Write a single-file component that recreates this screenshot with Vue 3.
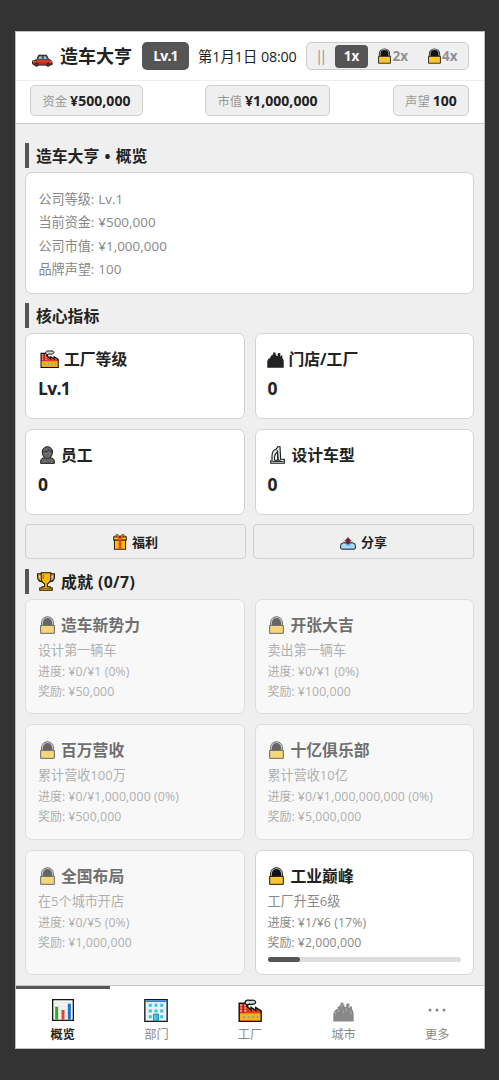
<script setup>
const speeds = [
  { label: '||', kind: 'pause' },
  { label: '1x', kind: 'on' },
  { label: '2x', kind: 'locked' },
  { label: '4x', kind: 'locked' },
]
const resources = [
  { name: '资金', value: '¥500,000', id: 'cash' },
  { name: '市值', value: '¥1,000,000', id: 'market' },
  { name: '声望', value: '100', id: 'fame' },
]
const overview = [
  ['公司等级:', 'Lv.1'],
  ['当前资金:', '¥500,000'],
  ['公司市值:', '¥1,000,000'],
  ['品牌声望:', '100'],
]
const stats = [
  { icon: 'factory', title: '工厂等级', value: 'Lv.1' },
  { icon: 'city', title: '门店/工厂', value: '0' },
  { icon: 'person', title: '员工', value: '0' },
  { icon: 'design', title: '设计车型', value: '0' },
]
const achievements = [
  { title: '造车新势力', desc: '设计第一辆车', progress: '¥0/¥1 (0%)', reward: '¥50,000', pct: 0 },
  { title: '开张大吉', desc: '卖出第一辆车', progress: '¥0/¥1 (0%)', reward: '¥100,000', pct: 0 },
  { title: '百万营收', desc: '累计营收100万', progress: '¥0/¥1,000,000 (0%)', reward: '¥500,000', pct: 0 },
  { title: '十亿俱乐部', desc: '累计营收10亿', progress: '¥0/¥1,000,000,000 (0%)', reward: '¥5,000,000', pct: 0 },
  { title: '全国布局', desc: '在5个城市开店', progress: '¥0/¥5 (0%)', reward: '¥1,000,000', pct: 0 },
  { title: '工业巅峰', desc: '工厂升至6级', progress: '¥1/¥6 (17%)', reward: '¥2,000,000', pct: 17 },
]
const tabs = [
  { icon: 'chart', label: '概览' },
  { icon: 'building', label: '部门' },
  { icon: 'factory', label: '工厂' },
  { icon: 'city', label: '城市' },
  { icon: 'more', label: '更多' },
]
</script>

<template>
  <svg class="sprite" aria-hidden="true">
    <symbol id="car" viewBox="0 0 64 38">
      <path d="M15 17 20 3H44L51 16 60 20 62 31 56 33H7L2 30V20Z" fill="#d93a2b" stroke="#171717" stroke-width="3" stroke-linejoin="round" />
      <path d="M17 16 22 5H31V16ZM34 5H43L48 16H34Z" fill="#78c7d8" stroke="#253238" stroke-width="2" />
      <path d="M3 27H61" stroke="#9f241d" stroke-width="3" />
      <circle cx="14" cy="32" r="5" fill="#444" stroke="#111" stroke-width="2" />
      <circle cx="49" cy="32" r="5" fill="#444" stroke="#111" stroke-width="2" />
      <path d="M3 21H7M57 21H61" stroke="#ffd34d" stroke-width="3" />
    </symbol>
    <symbol id="lock" viewBox="0 0 45 54">
      <path d="M3 30V20A19.500 19 0 0 1 42 20V30Z" fill="#111" />
      <path d="M7 28V20A15.500 15.500 0 0 1 38 20V28" fill="none" stroke="#a2abae" stroke-width="3.500" />
      <path d="M2 28H43V52H2Z" fill="#fcc632" stroke="#171717" stroke-width="3" stroke-linejoin="round" />
    </symbol>
    <symbol id="factory" viewBox="0 0 66 64">
      <path d="M3 62V12H26V22L36 31V23L49 32V24L64 33V62Z" fill="#e53b20" stroke="#111" stroke-width="4" />
      <path d="M5 40H62V60H5Z" fill="#f4b414" />
      <path d="M6 17H11M17 17H22M6 25H11M17 25H22M6 33H11M17 33H22" stroke="#f7d4cb" stroke-width="3" />
      <path d="M14 12V38" stroke="#5a140c" stroke-width="2.500" />
      <path d="M14 50H19M27 50H32M40 50H45M52 50H57" stroke="#60b9b0" stroke-width="6" />
      <path d="M24 22C24 17 27 15 31 14 38 16 48 15 49 9 48 3 39 2 34 4 29 2 21 3 20 8 18 12 21 15 24 16Z" fill="#d3d8da" stroke="#111" stroke-width="3.500" />
    </symbol>
    <symbol id="city" viewBox="0 0 64 60">
      <path d="M1 59V32H4V25H10V21H14V13H20V9H23V2H32V9H35V15H40V6H42V4H50V17H52V13H58V24H61V31H63V59Z" fill="currentColor" />
      <path d="M8 38V31M17 31V21M27 15V8M31 33V25M41 28V19M47 17V10M55 37V28" stroke-width="2" style="stroke: var(--facade)" />
    </symbol>
    <symbol id="person" viewBox="0 0 45 54">
      <path d="M7 18C6 10 13 2 22 2S39 10 37 18C37 27 33 33 30 35 38 36 43 39 43 46V52H2V46C2 39 7 36 14 35 9 31 7 25 7 18Z" fill="#656565" stroke="#161616" stroke-width="3" />
      <path d="M10 17C15 18 23 17 27 11 29 14 33 17 36 18M13 35C17 38 27 38 31 35" fill="none" stroke="#282828" stroke-width="2.500" />
      <path d="M16 21V27M29 20V26M12 45V51M34 45V51" stroke="#929292" stroke-width="2" />
    </symbol>
    <symbol id="design" viewBox="0 0 45 54">
      <path d="M2 52V45H6V30C6 19 11 11 19 9L23 2H30L32 40H43V52ZM14 43H23V18C15 23 12 31 14 43Z" fill="#dfe6e5" fill-rule="evenodd" stroke="#141414" stroke-width="3.200" />
      <path d="M21 11 25 38V43H32M7 46.500H40" fill="none" stroke="#202626" stroke-width="2.800" />
    </symbol>
    <symbol id="gift" viewBox="0 0 40 46">
      <path d="M4 17H36V44H4ZM2 8H38V18H2Z" fill="#ffb719" stroke="#33250b" stroke-width="3" />
      <path d="M16 9H24V43H16Z" fill="#e74728" />
      <path d="M19 9C6 10 5 2 10 2 15 1 18 5 20 9 22 4 26 0 31 2 36 6 28 10 21 9Z" fill="#f09721" stroke="#6d2310" stroke-width="2.500" />
    </symbol>
    <symbol id="share" viewBox="0 0 48 38">
      <path d="M2 25Q2 18 10 17H38Q46 18 46 25V34L43 36H5L2 34Z" fill="#a9daf3" stroke="#15191c" stroke-width="3" />
      <path d="M12 19H17L21 24H28L32 19H37" fill="#4aa4dd" stroke="#4aa4dd" stroke-width="2" />
      <path d="M24 1 34 12H28V19H20V12H14Z" fill="#8b182e" stroke="#3b101b" stroke-width="1.500" />
    </symbol>
    <symbol id="trophy" viewBox="0 0 52 54">
      <path d="M12 6H3V15C3 23 9 27 16 26M40 6H49V15C49 23 43 27 36 26" fill="none" stroke="#191306" stroke-width="6" />
      <path d="M12 7H4V15C4 22 10 25 16 25M40 7H48V15C48 22 42 25 36 25" fill="none" stroke="#f5ad00" stroke-width="2.500" />
      <path d="M12 2H40V17C40 27 36 31 30 34V42H38V46H44V52H8V46H14V42H22V34C16 31 12 27 12 17Z" fill="#fbb600" stroke="#191306" stroke-width="3" />
      <path d="M18 7V20M15 47H37" stroke="#8f6500" stroke-width="3" />
    </symbol>
    <symbol id="chart" viewBox="0 0 66 66">
      <path d="M2 2H64V64H2Z" fill="#f4f4f4" stroke="#171717" stroke-width="4" />
      <path d="M4 12H62M4 22H62M4 32H62M4 42H62M4 52H62" stroke="#ddd" stroke-width="1.500" />
      <path d="M14 62V23" stroke="#2cad23" stroke-width="9" />
      <path d="M33 62V33" stroke="#e14434" stroke-width="9" />
      <path d="M52 62V14" stroke="#1874ca" stroke-width="9" />
    </symbol>
    <symbol id="building" viewBox="0 0 70 68">
      <path d="M2 2H68V66H2Z" fill="#e4f1f6" stroke="#151515" stroke-width="4" />
      <path d="M4 4H66V9H4Z" fill="#2f80dd" />
      <path d="M18 14V60M35 14V40M52 14V60" stroke="#45c0dd" stroke-width="9" stroke-dasharray="9 8" />
      <path d="M28 45H42V64H28Z" fill="#58d2ec" stroke="#168cad" stroke-width="3" />
      <path d="M37 45V64" stroke="#168cad" stroke-width="2" />
    </symbol>
    <symbol id="more" viewBox="0 0 54 12">
      <g fill="currentColor"><circle cx="6" cy="6" r="4.500" /><circle cx="27" cy="6" r="4.500" /><circle cx="48" cy="6" r="4.500" /></g>
    </symbol>
  </svg>

  <div class="phone">
    <header class="topbar">
      <svg class="ic car"><use href="#car" /></svg>
      <h1>造车大亨</h1>
      <span class="level">Lv.1</span>
      <span class="date">第1月1日 <i>08:00</i></span>
      <div class="speeds">
        <span v-for="s in speeds" :key="s.label" class="speed" :class="s.kind">
          <svg v-if="s.kind === 'locked'" class="ic"><use href="#lock" /></svg>{{ s.label }}
        </span>
      </div>
    </header>
    <div class="resources">
      <div v-for="r in resources" :key="r.id" class="chip" :class="r.id">
        <span>{{ r.name }}</span><b>{{ r.value }}</b>
      </div>
    </div>

    <main>
      <h2 class="page-head">造车大亨 • 概览</h2>
      <section class="card summary">
        <p v-for="o in overview" :key="o[0]">{{ o[0] }} <i>{{ o[1] }}</i></p>
      </section>

      <h2>核心指标</h2>
      <div class="grid stats">
        <section v-for="s in stats" :key="s.title" class="card">
          <h3><span class="slot" :class="s.icon"><svg class="ic"><use :href="'#' + s.icon" /></svg></span>{{ s.title }}</h3>
          <strong>{{ s.value }}</strong>
        </section>
      </div>
      <div class="actions">
        <button><svg class="ic gift"><use href="#gift" /></svg>福利</button>
        <button><svg class="ic share"><use href="#share" /></svg>分享</button>
      </div>

      <h2 class="ach-head"><svg class="ic trophy"><use href="#trophy" /></svg>成就 (0/7)</h2>
      <div class="grid achievements">
        <section v-for="a in achievements" :key="a.title" class="card" :class="{ dim: !a.pct }">
          <h3><span class="slot lock"><svg class="ic"><use href="#lock" /></svg></span>{{ a.title }}</h3>
          <p class="desc">{{ a.desc }}</p>
          <p>进度: <i>{{ a.progress }}</i></p>
          <p>奖励: <i>{{ a.reward }}</i></p>
          <div v-if="a.pct" class="track"><div class="fill" :style="{ width: a.pct + '%' }"></div></div>
        </section>
      </div>
    </main>

    <nav>
      <a v-for="(t, i) in tabs" :key="t.label" :class="{ active: i === 0 }">
        <span class="tab-icon" :class="t.icon"><svg class="ic"><use :href="'#' + t.icon" /></svg></span>
        <span class="tab-label">{{ t.label }}</span>
      </a>
    </nav>
  </div>
</template>

<style>
body {
  background: #333;
}
</style>

<style scoped>
* {
  box-sizing: border-box;
}
h1, h2, h3, p {
  margin: 0;
}
i {
  font-style: normal;
}
.sprite {
  position: absolute;
  width: 0;
  height: 0;
}
.ic {
  display: block;
  flex: none;
}
.phone {
  --facade: #c4c4c4;
  width: 470px;
  height: 1018px;
  margin: 31px 0 0 15px;
  border: 1px solid #bbb;
  background: #efefef;
  color: #222;
  display: flex;
  flex-direction: column;
  font-family: "Open Sans", "Noto Sans CJK SC", sans-serif;
  white-space: nowrap;
  overflow: hidden;
}
.topbar {
  height: 49px;
  flex: none;
  background: #fff;
  border-bottom: 1px solid #eee;
  display: flex;
  align-items: center;
  padding: 0 15px 0 16px;
}
.car {
  width: 21px;
  height: 13px;
  margin-top: 8px;
}
h1 {
  width: 72px;
  margin-left: 7px;
  font-size: 18px;
  line-height: 26px;
}
.level {
  width: 47px;
  height: 28px;
  margin-left: 10px;
  border-radius: 5px;
  background: #555;
  color: #fff;
  font-size: 14px;
  font-weight: 700;
  letter-spacing: -0.8px;
  line-height: 27px;
  text-align: center;
}
.date {
  margin: -2px 0 0 9px;
  font-size: 14.3px;
}
.date i {
  letter-spacing: -0.2px;
}
.speeds {
  width: 163px;
  height: 28px;
  margin-left: auto;
  border: 1px solid #ccc;
  border-radius: 5px;
  background: #efefef;
  display: flex;
  align-items: center;
  color: #909090;
  font-size: 13.5px;
  font-weight: 700;
}
.speed {
  height: 23px;
  line-height: 22px;
  display: flex;
  align-items: center;
  justify-content: center;
}
.speed.pause {
  width: 28px;
  font-weight: 400;
  font-size: 14px;
  letter-spacing: -3.5px;
  padding-right: 3px;
}
.speed.on {
  width: 33px;
  border-radius: 4px;
  background: #555;
  color: #fff;
}
.speed.locked {
  width: 49.5px;
  padding-left: 1px;
}
.speed .ic {
  width: 13px;
  height: 16px;
  margin-right: 1px;
}
.resources {
  height: 43px;
  flex: none;
  background: #fff;
  border-bottom: 1px solid #c8c8c8;
  display: flex;
  justify-content: space-between;
  align-items: center;
  padding: 0 15px 4px 14px;
}
.chip {
  height: 31px;
  border: 1px solid #d0d0d0;
  border-radius: 5px;
  background: #efefef;
  display: flex;
  align-items: center;
  justify-content: center;
  gap: 3px;
  margin-top: 1px;
}
.chip.cash { width: 113px; }
.chip.market {
  width: 125px;
  margin-right: 1px;
}
.chip.fame { width: 76px; }
.chip span {
  color: #999;
  font-size: 12.3px;
}
.chip b {
  font-size: 14px;
  letter-spacing: 0.05px;
}
main {
  flex: 1;
  padding: 19px 10px 0 9px;
}
h2 {
  height: 25px;
  border-left: 4px solid #555;
  padding-left: 7px;
  display: flex;
  align-items: center;
  font-size: 15.8px;
  line-height: 24px;
}
.page-head {
  word-spacing: 1.2px;
}
.card {
  border: 1px solid #d3d3d3;
  border-radius: 7px;
  background: #fff;
}
.summary {
  height: 122px;
  margin: 4px 0 9px;
  padding: 15px 12.5px;
  color: #888;
  font-size: 13.1px;
}
.summary p {
  line-height: 23.3px;
}
.summary i {
  margin-left: 0.5px;
  font-size: 13.4px;
  letter-spacing: 0.05px;
}
.grid {
  display: grid;
  grid-template-columns: 1fr 1fr;
  gap: 10px;
}
.grid .card {
  padding: 0 12px;
}
.stats {
  --facade: transparent;
  margin-top: 5px;
  grid-template-rows: 86px 86px;
}
h3 {
  font-size: 15.8px;
  line-height: 24px;
  display: flex;
  align-items: center;
  margin-top: 13px;
}
.stats strong {
  display: block;
  margin-top: 5px;
  font-size: 17.5px;
  line-height: 25px;
  letter-spacing: -0.7px;
}
.slot {
  flex: none;
  width: 23px;
}
.slot .ic {
  width: 15px;
  height: 18px;
  margin-left: 1.5px;
}
.slot.factory { width: 26px; }
.slot.factory .ic {
  width: 19px;
  height: 18px;
}
.slot.city { width: 21px; }
.slot.city .ic {
  width: 17px;
  height: 16px;
  margin: 2px 0 0 -0.5px;
}
.slot.design { width: 24px; }
.slot.design .ic {
  margin-left: 2.5px;
}
.actions {
  display: flex;
  gap: 7px;
  margin-top: 9px;
}
.actions button {
  flex: 1;
  height: 35px;
  padding: 0;
  border: 1px solid #d0d0d0;
  border-radius: 4px;
  background: #efefef;
  color: #222;
  display: flex;
  align-items: center;
  justify-content: center;
  font: 700 13px/20px "Open Sans", "Noto Sans CJK SC", sans-serif;
}
.gift {
  width: 14px;
  height: 16px;
  margin-right: 5px;
}
.share {
  width: 16px;
  height: 13px;
  margin: 3px 5px 0 0;
}
.ach-head {
  margin-top: 10px;
  letter-spacing: 0.4px;
}
.trophy {
  width: 18px;
  height: 19px;
  margin: 0 6px 0 1px;
}
.achievements {
  margin-top: 5px;
  grid-template-rows: 115px 116px 125px;
}
.achievements .card {
  color: #888;
}
.achievements h3 {
  color: #222;
}
.achievements p {
  font-size: 12px;
  line-height: 20.4px;
}
.achievements p i {
  font-size: 12.3px;
  letter-spacing: 0.1px;
}
.achievements .desc {
  margin: 1px 0 -1px;
  font-size: 13.1px;
  line-height: 25px;
}
.dim {
  opacity: 0.62;
}
.track {
  height: 5px;
  margin-top: 3px;
  border-radius: 3px;
  background: #ddd;
}
.fill {
  height: 100%;
  border-radius: 3px;
  background: #555;
}
nav {
  height: 63px;
  flex: none;
  border-top: 1px solid #c8c8c8;
  background: #fff;
  display: flex;
}
nav a {
  flex: 1;
  border-top: 3px solid transparent;
  display: flex;
  flex-direction: column;
  align-items: center;
  padding-top: 10px;
  color: #888;
}
nav a.active {
  border-top-color: #555;
  color: #222;
  font-weight: 700;
}
.tab-icon {
  height: 24px;
}
.tab-icon .ic {
  width: 22px;
  height: 22px;
}
.tab-icon.building .ic,
.tab-icon.factory .ic {
  width: 24px;
  height: 23px;
}
.tab-icon.city .ic {
  width: 21px;
  height: 20px;
  margin-top: 3px;
}
.tab-icon.more .ic {
  width: 18px;
  height: 4px;
  margin-top: 9px;
}
.tab-label {
  font-size: 12.2px;
  line-height: 23px;
}
</style>
